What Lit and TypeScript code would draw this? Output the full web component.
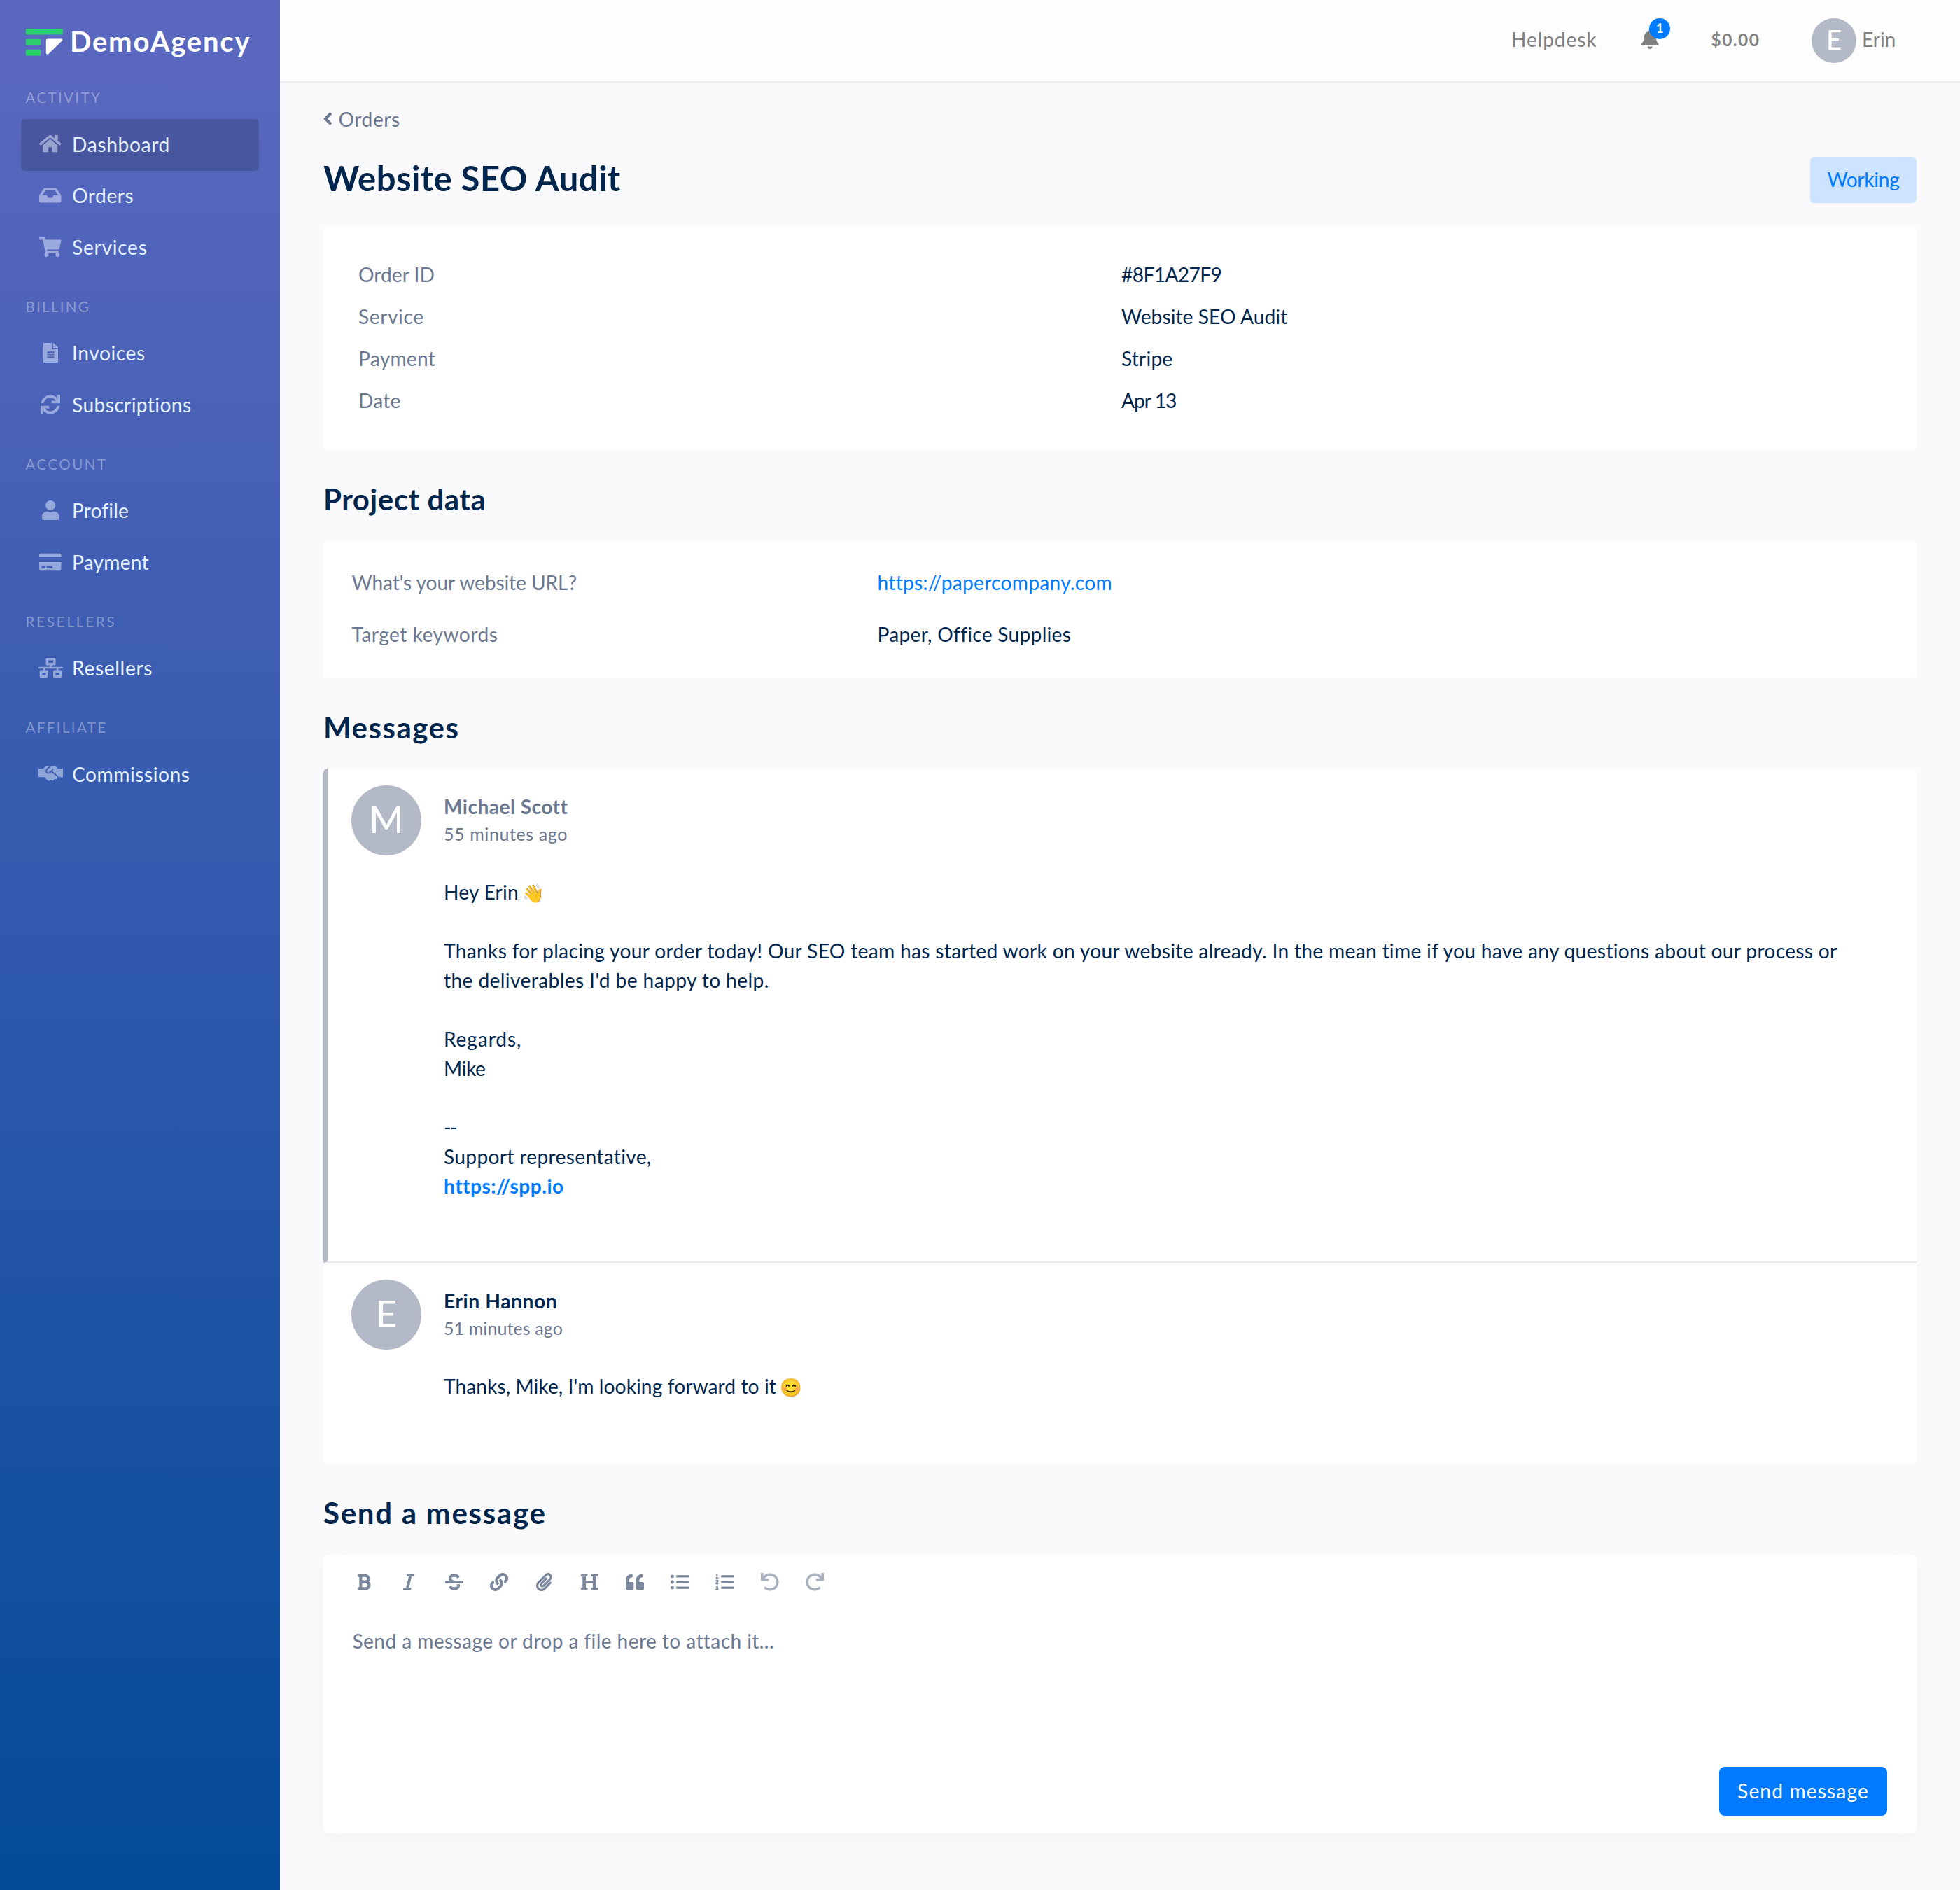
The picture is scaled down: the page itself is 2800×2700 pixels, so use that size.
import { LitElement, html, css, svg, nothing } from "lit";
import { customElement, property } from "lit/decorators.js";
import { classMap } from "lit/directives/class-map.js";

type Icon = { w: number; d: string };

const BARS =
  "M496 384H176a16 16 0 0 0-16 16v32a16 16 0 0 0 16 16h320a16 16 0 0 0 16-16v-32a16 16 0 0 0-16-16zm0-320H176a16 16 0 0 0-16 16v32a16 16 0 0 0 16 16h320a16 16 0 0 0 16-16V80a16 16 0 0 0-16-16zm0 160H176a16 16 0 0 0-16 16v32a16 16 0 0 0 16 16h320a16 16 0 0 0 16-16v-32a16 16 0 0 0-16-16z";

const ICONS: Record<string, Icon> = {
  home: {
    w: 576,
    d: "M280.37 148.26L96 300.11V464a16 16 0 0 0 16 16l112.06-.29a16 16 0 0 0 15.92-16V368a16 16 0 0 1 16-16h64a16 16 0 0 1 16 16v95.64a16 16 0 0 0 16 16.05L464 480a16 16 0 0 0 16-16V300L295.67 148.26a12.19 12.19 0 0 0-15.3 0zM571.6 251.47L488 182.56V44.05a12 12 0 0 0-12-12h-56a12 12 0 0 0-12 12v72.61L318.47 43a48 48 0 0 0-61 0L4.34 251.47a12 12 0 0 0-1.6 16.9l25.5 31A12 12 0 0 0 45.15 301l235.22-193.74a12.19 12.19 0 0 1 15.3 0L530.9 301a12 12 0 0 0 16.9-1.6l25.5-31a12 12 0 0 0-1.7-16.93z",
  },
  inbox: {
    w: 576,
    d: "M567.938 243.908L462.25 85.374A48.003 48.003 0 0 0 422.311 64H153.689a48 48 0 0 0-39.938 21.374L8.062 243.908A47.994 47.994 0 0 0 0 270.533V400c0 26.51 21.49 48 48 48h480c26.51 0 48-21.49 48-48V270.533a47.994 47.994 0 0 0-8.062-26.625zM162.252 128h251.497l85.333 128H376l-32 64H232l-32-64H76.918l85.334-128z",
  },
  cart: {
    w: 576,
    d: "M528.12 301.319l47.273-208C578.806 78.301 567.391 64 551.99 64H159.208l-9.166-44.81C147.758 8.021 137.93 0 126.529 0H24C10.745 0 0 10.745 0 24v16c0 13.255 10.745 24 24 24h69.883l70.248 343.435C147.325 417.1 136 435.222 136 456c0 30.928 25.072 56 56 56s56-25.072 56-56c0-15.674-6.447-29.835-16.824-40h209.647C430.447 426.165 424 440.326 424 456c0 30.928 25.072 56 56 56s56-25.072 56-56c0-22.172-12.888-41.332-31.579-50.405l5.517-24.276c3.413-15.018-8.002-29.319-23.403-29.319H218.117l-6.545-32h293.145c11.206 0 20.92-7.754 23.403-18.681z",
  },
  file: {
    w: 384,
    d: "M224 136V0H24C10.7 0 0 10.7 0 24v464c0 13.3 10.7 24 24 24h336c13.3 0 24-10.7 24-24V160H248c-13.2 0-24-10.8-24-24zm64 236c0 6.6-5.4 12-12 12H108c-6.6 0-12-5.4-12-12v-8c0-6.6 5.4-12 12-12h168c6.6 0 12 5.4 12 12v8zm0-64c0 6.6-5.4 12-12 12H108c-6.6 0-12-5.4-12-12v-8c0-6.6 5.4-12 12-12h168c6.6 0 12 5.4 12 12v8zm0-72v8c0 6.6-5.4 12-12 12H108c-6.6 0-12-5.4-12-12v-8c0-6.6 5.4-12 12-12h168c6.6 0 12 5.4 12 12zm96-114.1v6.1H256V0h6.1c6.4 0 12.5 2.5 17 7l97.9 98c4.5 4.5 7 10.6 7 16.9z",
  },
  sync: {
    w: 512,
    d: "M440.65 12.57l4 82.77A247.16 247.16 0 0 0 255.83 8C134.73 8 33.91 94.92 12.29 209.82A12 12 0 0 0 24.09 224h49.05a12 12 0 0 0 11.67-9.26 175.91 175.91 0 0 1 317-56.94l-101.46-4.86a12 12 0 0 0-12.57 12v47.41a12 12 0 0 0 12 12H500a12 12 0 0 0 12-12V12a12 12 0 0 0-12-12h-47.37a12 12 0 0 0-11.98 12.57zM255.83 432a175.61 175.61 0 0 1-146-77.8l101.8 4.87a12 12 0 0 0 12.57-12v-47.4a12 12 0 0 0-12-12H12a12 12 0 0 0-12 12V500a12 12 0 0 0 12 12h47.35a12 12 0 0 0 12-12.6l-4.15-82.57A247.17 247.17 0 0 0 255.83 504c121.11 0 221.93-86.92 243.55-201.82a12 12 0 0 0-11.8-14.18h-49.05a12 12 0 0 0-11.67 9.26A175.86 175.86 0 0 1 255.83 432z",
  },
  user: {
    w: 448,
    d: "M224 256c70.7 0 128-57.3 128-128S294.7 0 224 0 96 57.3 96 128s57.3 128 128 128zm89.6 32h-16.7c-22.2 10.2-46.9 16-72.9 16s-50.6-5.8-72.9-16h-16.7C60.2 288 0 348.2 0 422.4V464c0 26.5 21.5 48 48 48h352c26.5 0 48-21.5 48-48v-41.6c0-74.2-60.2-134.4-134.4-134.4z",
  },
  card: {
    w: 576,
    d: "M0 432c0 26.5 21.5 48 48 48h480c26.5 0 48-21.5 48-48V256H0v176zm192-68c0-6.6 5.4-12 12-12h136c6.6 0 12 5.4 12 12v40c0 6.6-5.4 12-12 12H204c-6.6 0-12-5.4-12-12v-40zm-128 0c0-6.6 5.4-12 12-12h72c6.6 0 12 5.4 12 12v40c0 6.6-5.4 12-12 12H76c-6.6 0-12-5.4-12-12v-40zM576 80v48H0V80c0-26.5 21.5-48 48-48h480c26.5 0 48 21.5 48 48z",
  },
  network: {
    w: 640,
    d: "M640 264v-16c0-8.84-7.16-16-16-16H344v-40h72c17.67 0 32-14.33 32-32V32c0-17.67-14.33-32-32-32H224c-17.67 0-32 14.33-32 32v128c0 17.67 14.33 32 32 32h72v40H16c-8.84 0-16 7.16-16 16v16c0 8.84 7.16 16 16 16h104v40H64c-17.67 0-32 14.33-32 32v128c0 17.67 14.33 32 32 32h160c17.67 0 32-14.33 32-32V352c0-17.67-14.33-32-32-32h-56v-40h304v40h-56c-17.67 0-32 14.33-32 32v128c0 17.67 14.33 32 32 32h160c17.67 0 32-14.33 32-32V352c0-17.67-14.33-32-32-32h-56v-40h104c8.84 0 16-7.16 16-16zM256 128V64h128v64H256zm-64 320H96v-64h96v64zm352 0h-96v-64h96v64z",
  },
  handshake: {
    w: 640,
    d: "M434.7 64h-85.9c-8 0-15.7 3-21.6 8.4l-98.3 90c-.1.1-.2.3-.3.4-16.6 15.6-16.3 40.5-2.1 56 12.7 13.9 39.4 17.6 56.1 2.7.1-.1.3-.1.4-.2l79.9-73.2c6.5-5.9 16.7-5.5 22.6 1 6 6.5 5.5 16.6-1 22.6l-26.1 23.9L504 313.8c10.4 8.5 16.6 21.6 18 38.2H624c8.8 0 16-7.2 16-16V144c0-8.8-7.2-16-16-16H511.9l-54.6-54.6c-5.9-6-14.1-9.4-22.6-9.4zM483.9 338.7L334.6 217.5l-30 27.5c-29.7 27.1-75.2 24.5-101.7-4.4-26.9-29.4-24.8-74.9 4.4-101.7L289.1 64h-83.8c-8.5 0-16.6 3.4-22.6 9.4L128 128H16c-8.8 0-16 7.2-16 16v192c0 8.8 7.2 16 16 16h130.3l90.5 81.9c27.4 22.3 67.7 18.1 90-9.3l.2-.2 17.9 15.5c15.9 13 39.4 10.5 52.3-5.4l31.4-38.6 5.4 4.4c13.7 11.1 33.9 9.1 45-4.7l9.5-11.7c11.2-13.8 9.1-33.9-4.6-45.2z",
  },
  bell: {
    w: 448,
    d: "M224 512c35.32 0 63.97-28.65 63.97-64H160.03c0 35.35 28.65 64 63.97 64zm215.39-149.71c-19.32-20.76-55.47-51.99-55.47-154.29 0-77.7-54.48-139.9-127.94-155.16V32c0-17.67-14.32-32-31.98-32s-31.98 14.33-31.98 32v20.84C118.56 68.1 64.08 130.3 64.08 208c0 102.3-36.15 133.53-55.47 154.29-6 6.45-8.66 14.16-8.61 21.71.11 16.4 12.98 32 32.1 32h383.8c19.12 0 32-15.6 32.1-32 .05-7.55-2.61-15.27-8.61-21.71z",
  },
  chevron: {
    w: 320,
    d: "M24.5 233L215 42.6c9.4-9.4 24.6-9.4 34 0l37 37c9.4 9.4 9.4 24.6 0 34L143.6 256 286 398.4c9.4 9.4 9.4 24.6 0 34l-37 37c-9.4 9.4-24.6 9.4-34 0L24.5 279c-12.7-12.7-12.7-33.3 0-46z",
  },
  bold: {
    w: 384,
    d: "M333.49 238a122 122 0 0 0 27-65.21C367.87 96.49 308 32 233.42 32H34a16 16 0 0 0-16 16v48a16 16 0 0 0 16 16h31.87v288H34a16 16 0 0 0-16 16v48a16 16 0 0 0 16 16h209.32c70.8 0 134.14-51.75 141-122.4 4.74-48.45-16.39-92.06-50.83-119.6zM145.66 112h87.76a48 48 0 0 1 0 96h-87.76zm87.76 288h-87.76V288h87.76a56 56 0 0 1 0 112z",
  },
  italic: {
    w: 320,
    d: "M320 48v32a16 16 0 0 1-16 16h-62.76l-80 320H208a16 16 0 0 1 16 16v32a16 16 0 0 1-16 16H16a16 16 0 0 1-16-16v-32a16 16 0 0 1 16-16h62.76l80-320H112a16 16 0 0 1-16-16V48a16 16 0 0 1 16-16h192a16 16 0 0 1 16 16z",
  },
  strike: {
    w: 512,
    d: "M496 224H293.9l-87.17-26.83A43.55 43.55 0 0 1 219.55 112h66.79A49.89 49.89 0 0 1 331 139.58a16 16 0 0 0 21.46 7.15l42.94-21.47a16 16 0 0 0 7.16-21.46l-.53-1A128 128 0 0 0 287.51 32h-68a123.68 123.68 0 0 0-123 135.64c2 20.89 10.1 39.83 21.78 56.36H16a16 16 0 0 0-16 16v32a16 16 0 0 0 16 16h480a16 16 0 0 0 16-16v-32a16 16 0 0 0-16-16zm-180.24 96A43 43 0 0 1 336 356.45 43.59 43.59 0 0 1 292.45 400h-66.79A49.89 49.89 0 0 1 181 372.42a16 16 0 0 0-21.46-7.15l-42.94 21.47a16 16 0 0 0-7.16 21.46l.53 1A128 128 0 0 0 224.49 480h68a123.68 123.68 0 0 0 123-135.64 114.25 114.25 0 0 0-5.34-24.36z",
  },
  link: {
    w: 512,
    d: "M326.612 185.391c59.747 59.809 58.927 155.698.36 214.59-.11.12-.24.25-.36.37l-67.2 67.2c-59.27 59.27-155.699 59.262-214.96 0-59.27-59.26-59.27-155.7 0-214.96l37.106-37.106c9.84-9.84 26.786-3.3 27.294 10.606.648 17.722 3.826 35.527 9.69 52.721 1.986 5.822.567 12.262-3.783 16.612l-13.087 13.087c-28.026 28.026-28.905 73.66-1.155 101.96 28.024 28.579 74.086 28.749 102.325.51l67.2-67.19c28.191-28.191 28.073-73.757 0-101.83-3.701-3.694-7.429-6.564-10.341-8.569a16.037 16.037 0 0 1-6.947-12.606c-.396-10.567 3.348-21.456 11.698-29.806l21.054-21.055c5.521-5.521 14.182-6.199 20.584-1.731a152.482 152.482 0 0 1 20.522 17.197zM467.547 44.449c-59.261-59.262-155.69-59.27-214.96 0l-67.2 67.2c-.12.12-.25.25-.36.37-58.566 58.892-59.387 154.781.36 214.59a152.454 152.454 0 0 0 20.521 17.196c6.402 4.468 15.064 3.789 20.584-1.731l21.054-21.055c8.35-8.35 12.094-19.239 11.698-29.806a16.037 16.037 0 0 0-6.947-12.606c-2.912-2.005-6.64-4.875-10.341-8.569-28.073-28.073-28.191-73.639 0-101.83l67.2-67.19c28.239-28.239 74.3-28.069 102.325.51 27.75 28.3 26.872 73.934-1.155 101.96l-13.087 13.087c-4.35 4.35-5.769 10.79-3.783 16.612 5.864 17.194 9.042 34.999 9.69 52.721.509 13.906 17.454 20.446 27.294 10.606l37.106-37.106c59.271-59.259 59.271-155.699.001-214.959z",
  },
  clip: {
    w: 448,
    d: "M43.246 466.142c-58.43-60.289-57.341-157.511 1.386-217.581L254.392 34c44.316-45.332 116.351-45.336 160.671 0 43.89 44.894 43.943 117.329 0 162.276L232.214 383.128c-29.855 30.537-78.633 30.111-107.982-.998-28.275-29.97-27.368-77.473 1.452-106.953l143.743-146.835c6.182-6.314 16.312-6.422 22.626-.241l22.861 22.379c6.315 6.182 6.422 16.312.241 22.626L171.427 319.927c-4.932 5.045-5.236 13.428-.648 18.292 4.372 4.634 11.245 4.711 15.688.165l182.849-186.851c19.613-20.062 19.613-52.725-.011-72.798-19.189-19.627-49.957-19.637-69.154 0L90.39 293.295c-34.763 35.56-35.299 93.12-1.191 128.313 34.01 35.093 88.985 35.137 123.058.286l172.06-175.999c6.177-6.319 16.307-6.433 22.626-.256l22.877 22.364c6.319 6.177 6.434 16.307.256 22.626l-172.06 175.998c-59.576 60.938-155.943 60.216-214.77-.485z",
  },
  heading: {
    w: 512,
    d: "M448 96v320h32a16 16 0 0 1 16 16v32a16 16 0 0 1-16 16H320a16 16 0 0 1-16-16v-32a16 16 0 0 1 16-16h32V288H160v128h32a16 16 0 0 1 16 16v32a16 16 0 0 1-16 16H32a16 16 0 0 1-16-16v-32a16 16 0 0 1 16-16h32V96H32a16 16 0 0 1-16-16V48a16 16 0 0 1 16-16h160a16 16 0 0 1 16 16v32a16 16 0 0 1-16 16h-32v128h192V96h-32a16 16 0 0 1-16-16V48a16 16 0 0 1 16-16h160a16 16 0 0 1 16 16v32a16 16 0 0 1-16 16z",
  },
  quote: {
    w: 512,
    d: "M464 256h-80v-64c0-35.3 28.7-64 64-64h8c13.3 0 24-10.7 24-24V56c0-13.3-10.7-24-24-24h-8c-88.4 0-160 71.6-160 160v240c0 26.5 21.5 48 48 48h128c26.5 0 48-21.5 48-48V304c0-26.5-21.5-48-48-48zm-288 0H96v-64c0-35.3 28.7-64 64-64h8c13.3 0 24-10.7 24-24V56c0-13.3-10.7-24-24-24h-8C71.6 32 0 103.6 0 192v240c0 26.5 21.5 48 48 48h128c26.5 0 48-21.5 48-48V304c0-26.5-21.5-48-48-48z",
  },
  bullets: {
    w: 512,
    d:
      "M48 48a48 48 0 1 0 48 48 48 48 0 0 0-48-48zm0 160a48 48 0 1 0 48 48 48 48 0 0 0-48-48zm0 160a48 48 0 1 0 48 48 48 48 0 0 0-48-48z" +
      BARS,
  },
  numbers: {
    w: 512,
    d:
      "M61.77 401l17.5-20.15a19.92 19.92 0 0 0 5.07-14.19v-3.31C84.34 356 80.5 352 73 352H16a8 8 0 0 0-8 8v16a8 8 0 0 0 8 8h22.83a157.41 157.41 0 0 0-11 12.31l-5.61 7c-4 5.07-5.25 10.13-2.8 14.88l1.05 1.93c3 5.76 6.29 7.88 12.25 7.88h4.73c10.33 0 15.94 2.44 15.94 9.09 0 4.72-4.2 8.22-14.36 8.22a41.54 41.54 0 0 1-15.47-3.12c-6.49-3.88-11.74-3.5-15.6 3.12l-5.59 9.31c-3.72 6.13-3.19 11.72 2.63 15.94 7.71 4.69 20.38 9.44 37 9.44 34.16 0 48.5-22.75 48.5-44.12-.03-14.38-9.12-29.76-28.73-34.88zM12.1 320H80a8 8 0 0 0 8-8v-16a8 8 0 0 0-8-8H41.33c3.28-10.29 48.34-18.68 48.34-56.44 0-29.06-25-39.56-44.47-39.56-21.36 0-33.8 10-40.46 18.75-4.37 5.59-3 10.84 2.8 15.37l8.58 6.88c5.61 4.56 11 2.47 16.12-2.44a13.44 13.44 0 0 1 9.46-3.84c3.33 0 9.28 1.56 9.28 8.75C51 248.19 0 257.31 0 304.59v4C0 316 5.08 320 12.1 320zM16 160h64a8 8 0 0 0 8-8v-16a8 8 0 0 0-8-8H64V40a8 8 0 0 0-8-8H32a8 8 0 0 0-7.14 4.42l-8 16A8 8 0 0 0 24 64h8v64H16a8 8 0 0 0-8 8v16a8 8 0 0 0 8 8z" +
      BARS,
  },
  undo: {
    w: 512,
    d: "M212.333 224.333H12c-6.627 0-12-5.373-12-12V12C0 5.373 5.373 0 12 0h48c6.627 0 12 5.373 12 12v78.112C117.773 39.279 184.26 7.47 258.175 8.007c136.906.994 246.448 111.623 246.157 248.532C504.041 393.258 393.12 504 256.333 504c-64.089 0-122.496-24.313-166.51-64.215-5.099-4.622-5.334-12.554-.467-17.42l33.967-33.967c4.474-4.474 11.662-4.717 16.401-.525C170.76 415.336 211.58 432 256.333 432c97.268 0 176-78.716 176-176 0-97.267-78.716-176-176-176-58.496 0-110.28 28.476-142.274 72.333h98.274c6.627 0 12 5.373 12 12v48c0 6.627-5.373 12-12 12z",
  },
};

/** Solid glyph icon; its height is the font size and its width follows the glyph. */
@customElement("ui-icon")
class UiIcon extends LitElement {
  @property() name = "";
  @property({ type: Boolean }) flip = false;
  static styles = css`
    :host { display: inline-flex; }
    svg { display: block; height: 1em; fill: currentColor; }
    .flip { transform: scaleX(-1); }
  `;
  render() {
    const i = ICONS[this.name];
    return i
      ? html`<svg class=${classMap({ flip: this.flip })} viewBox="0 0 ${i.w} 512">${svg`<path d=${i.d}></path>`}</svg>`
      : nothing;
  }
}

/** Text run with its own tracking, in pixels. */
const t = (text: string, tracking: number) => html`<span style="letter-spacing:${tracking}px">${text}</span>`;

type Item = { icon: string; label: string; ls: number; active?: boolean };
const NAV: { title: string; ls: number; items: Item[] }[] = [
  {
    title: "ACTIVITY", ls: 2.38,
    items: [
      { icon: "home", label: "Dashboard", ls: 0.62, active: true },
      { icon: "inbox", label: "Orders", ls: 0.55 },
      { icon: "cart", label: "Services", ls: 0.7 },
    ],
  },
  {
    title: "BILLING", ls: 2.31,
    items: [
      { icon: "file", label: "Invoices", ls: 0.54 },
      { icon: "sync", label: "Subscriptions", ls: 0.38 },
    ],
  },
  {
    title: "ACCOUNT", ls: 2.5,
    items: [
      { icon: "user", label: "Profile", ls: 0.1 },
      { icon: "card", label: "Payment", ls: 0.2 },
    ],
  },
  { title: "RESELLERS", ls: 2.83, items: [{ icon: "network", label: "Resellers", ls: 0.65 }] },
  { title: "AFFILIATE", ls: 2.39, items: [{ icon: "handshake", label: "Commissions", ls: 0.53 }] },
];

@customElement("side-nav")
class SideNav extends LitElement {
  static styles = css`
    :host { display: block; background: linear-gradient(180deg, #5c68c0 0%, #044a99 100%); color: #e4f2ff; }
    .logo { display: flex; align-items: flex-start; height: 92.5px; box-sizing: border-box; padding: 41px 0 0 37px; }
    .mark { display: block; flex: none; width: 53px; height: 39px; }
    .name { margin: -9.5px 0 0 10px; font-size: 40px; line-height: 54px; font-weight: 700; color: #fff; white-space: nowrap; }
    .title { box-sizing: border-box; height: 77.5px; padding: 34.8px 0 0 36.5px; font-size: 20.5px; line-height: 24.6px; color: rgba(255, 255, 255, 0.36); }
    .item { display: flex; align-items: center; height: 73.75px; margin: 0 30px; border-radius: 6px; }
    .active { background: rgba(0, 0, 0, 0.15); }
    .icon { display: flex; justify-content: center; width: 36px; margin: 0 13px 3px 24px; font-size: 28px; opacity: 0.52; color: #e0eaff; }
    .label { padding-bottom: 2.4px; white-space: nowrap; }
  `;
  render() {
    return html`
      <div class="logo">
        <svg class="mark" viewBox="0 0 53 39">
          <rect width="53" height="8.6" rx="1.5" fill="#2bd06d"></rect>
          <rect y="14.8" width="21" height="8.6" rx="1.5" fill="#2bd06d"></rect>
          <rect y="29.8" width="21" height="8.6" rx="1.5" fill="#2bd06d"></rect>
          <path d="M31 14.5H50.5Q53.6 14.7 51.8 17.2L33 35.4Q29.4 38 28.8 35V17Q28.9 14.6 31 14.5z" fill="#fff"></path>
        </svg>
        <div class="name">${t("DemoAgency", 1.8)}</div>
      </div>
      ${NAV.map(
        (g) => html`
          <div class="title">${t(g.title, g.ls)}</div>
          ${g.items.map(
            (i) => html`<div class=${classMap({ item: true, active: !!i.active })}>
              <span class="icon"><ui-icon name=${i.icon}></ui-icon></span>
              <span class="label">${t(i.label, i.ls)}</span>
            </div>`
          )}
        `
      )}
    `;
  }
}

@customElement("top-bar")
class TopBar extends LitElement {
  static styles = css`
    :host {
      display: grid; grid-template-columns: 186px 99.5px 143.5px 72px 140px; justify-content: end;
      height: 116px; border-bottom: 2px solid #ebebf1; background: #fdfdfd; color: #808080;
    }
    .text { line-height: 112px; }
    .balance { font-size: 24.5px; font-weight: 700; line-height: 114px; }
    .bell { position: relative; padding-top: 42px; font-size: 28px; line-height: 0; }
    .badge {
      position: absolute; left: 11px; top: 26px; width: 30px; height: 30px; border-radius: 50%;
      background: #007bff; color: #fff; font-size: 18.5px; font-weight: 700; line-height: 29px; text-align: center;
    }
    .avatar { width: 64px; height: 64px; margin-top: 26px; border-radius: 50%; background: #b3b9c7; color: #fff; font-size: 38px; font-weight: 500; line-height: 60px; text-align: center; }
  `;
  render() {
    return html`
      <div class="text">${t("Helpdesk", 0.85)}</div>
      <div class="bell"><ui-icon name="bell"></ui-icon><span class="badge">1</span></div>
      <div class="balance">${t("$0.00", 1.45)}</div>
      <div class="avatar">E</div>
      <div class="text">${t("Erin", -0.1)}</div>
    `;
  }
}

@customElement("chat-message")
class ChatMessage extends LitElement {
  @property() initial = "";
  static styles = css`
    :host { display: flex; box-sizing: border-box; padding: 24px 0 0 40px; }
    .avatar { flex: none; width: 100px; height: 100px; border-radius: 50%; background: #b3b9c7; color: #fff; font-size: 53px; font-weight: 500; line-height: 96px; text-align: center; }
    .content { padding: 8.5px 0 0 32px; white-space: nowrap; }
  `;
  render() {
    return html`<div class="avatar">${this.initial}</div><div class="content"><slot></slot></div>`;
  }
}

const ORDER: [string, number, string, number][] = [
  ["Order ID", 0, "#8F1A27F9", -0.65],
  ["Service", 0.55, "Website SEO Audit", 0.05],
  ["Payment", 0.25, "Stripe", 0.15],
  ["Date", 0.2, "Apr 13", -1],
];

const TOOLS = ["bold", "italic", "strike", "link", "clip", "heading", "quote", "bullets", "numbers"];

@customElement("app-root")
class AppRoot extends LitElement {
  static styles = css`
    :host {
      display: grid; grid-template-columns: 400px 1fr; height: 2700px; background: #fafafc; color: #00264d;
      font-family: Lato, "Liberation Sans", sans-serif; font-size: 28.2px; line-height: 42px; font-variant-ligatures: none;
    }
    .page { padding: 31px 62px 0; }
    .back { display: flex; align-items: center; height: 42px; color: #6b7890; }
    .back ui-icon { width: 21.5px; margin-bottom: 1.5px; font-size: 21px; }
    .head { display: flex; justify-content: space-between; height: 66px; margin: 33px 0 32px; }
    h1 { margin: 0; font-size: 49px; line-height: 61px; font-weight: 700; }
    h2 { box-sizing: border-box; height: 130px; margin: 0; padding: 47px 0 0; font-size: 42px; line-height: 48px; font-weight: 700; }
    h2.last { height: 132px; }
    .status { width: 152px; height: 66px; border-radius: 6px; background: #cce4ff; color: #007bff; line-height: 64px; text-align: center; }
    .card { box-sizing: border-box; border-radius: 6px; background: #fff; }
    .order { height: 320px; padding: 39.5px 0 0 50px; line-height: 60px; }
    .order .row { display: grid; grid-template-columns: 1090px 1fr; }
    .project { height: 196px; padding: 22.5px 0 0 40.5px; line-height: 74px; }
    .project .row { display: grid; grid-template-columns: 751px 1fr; }
    .muted { color: #6b7890; }
    .blue { color: #007bff; }
    .thread { height: 992px; }
    .staff { height: 706px; padding-left: 34px; border-left: 6px solid #b3b9c7; border-bottom: 2px solid #e9ebf0; border-top-left-radius: 6px; }
    .strong { font-weight: 700; }
    .time { margin-bottom: 43.8px; font-size: 25px; line-height: 36.2px; }
    .line { min-height: 42px; }
    .emoji { display: inline-block; margin-left: 5.5px; font-size: 25.5px; line-height: 0; }
    .editor { display: flex; flex-direction: column; height: 396px; box-shadow: 0 0 0 1.5px #fcfcfe, 0 6px 30px rgba(60, 40, 150, 0.035); }
    .tools { display: flex; height: 76px; padding-left: 26px; font-size: 26px; color: #7b879d; }
    .tool { display: flex; align-items: center; justify-content: center; width: 64.4px; }
    .off { opacity: 0.65; }
    .hint { flex: 1; padding: 24.5px 0 0 41.5px; }
    .send { align-self: flex-end; width: 240px; height: 70px; margin: 0 42px 24px 0; border-radius: 8px; background: #007bff; color: #fff; line-height: 68px; text-align: center; }
  `;
  render() {
    return html`
      <side-nav></side-nav>
      <main>
        <top-bar></top-bar>
        <div class="page">
          <div class="back"><ui-icon name="chevron"></ui-icon>${t("Orders", 0.55)}</div>
          <div class="head">
            <h1>${t("Website SEO Audit", 0.5)}</h1>
            <div class="status">${t("Working", -0.3)}</div>
          </div>
          <section class="card order">
            ${ORDER.map(([k, a, v, b]) => html`<div class="row"><span class="muted">${t(k, a)}</span><span>${t(v, b)}</span></div>`)}
          </section>
          <h2>${t("Project data", 0.55)}</h2>
          <section class="card project">
            <div class="row"><span class="muted">${t("What's your website URL?", -0.12)}</span><span class="blue">${t("https://papercompany.com", 0.25)}</span></div>
            <div class="row"><span class="muted">${t("Target keywords", 0.45)}</span><span>${t("Paper, Office Supplies", 0.26)}</span></div>
          </section>
          <h2>${t("Messages", 1.5)}</h2>
          <section class="card thread">
            <chat-message class="staff" initial="M">
              <div class="strong muted">${t("Michael Scott", 0.42)}</div>
              <div class="time muted">${t("55 minutes ago", 0.6)}</div>
              <div class="line">${t("Hey Erin", 0.2)}<span class="emoji">👋</span></div>
              <div class="line"></div>
              <div class="line">${t("Thanks for placing your order today! Our SEO team has started work on your website already. In the mean time if you have any questions about our process or", 0.29)}</div>
              <div class="line">${t("the deliverables I'd be happy to help.", 0.37)}</div>
              <div class="line"></div>
              <div class="line">${t("Regards,", 0.85)}</div>
              <div class="line">${t("Mike", -0.4)}</div>
              <div class="line"></div>
              <div class="line">${t("--", -1.5)}</div>
              <div class="line">${t("Support representative,", 0.3)}</div>
              <div class="line strong blue">${t("https://spp.io", 0.45)}</div>
            </chat-message>
            <chat-message initial="E">
              <div class="strong">${t("Erin Hannon", 0.58)}</div>
              <div class="time muted">${t("51 minutes ago", 0.1)}</div>
              <div class="line">${t("Thanks, Mike, I'm looking forward to it", 0.06)}<span class="emoji">😊</span></div>
            </chat-message>
          </section>
          <h2 class="last">${t("Send a message", 1.7)}</h2>
          <section class="card editor">
            <div class="tools">
              ${TOOLS.map((n) => html`<span class="tool"><ui-icon name=${n}></ui-icon></span>`)}
              <span class="tool off"><ui-icon name="undo"></ui-icon></span>
              <span class="tool off"><ui-icon name="undo" flip></ui-icon></span>
            </div>
            <div class="hint muted">${t("Send a message or drop a file here to attach it...", 0.37)}</div>
            <div class="send">${t("Send message", 1.1)}</div>
          </section>
        </div>
      </main>
    `;
  }
}
